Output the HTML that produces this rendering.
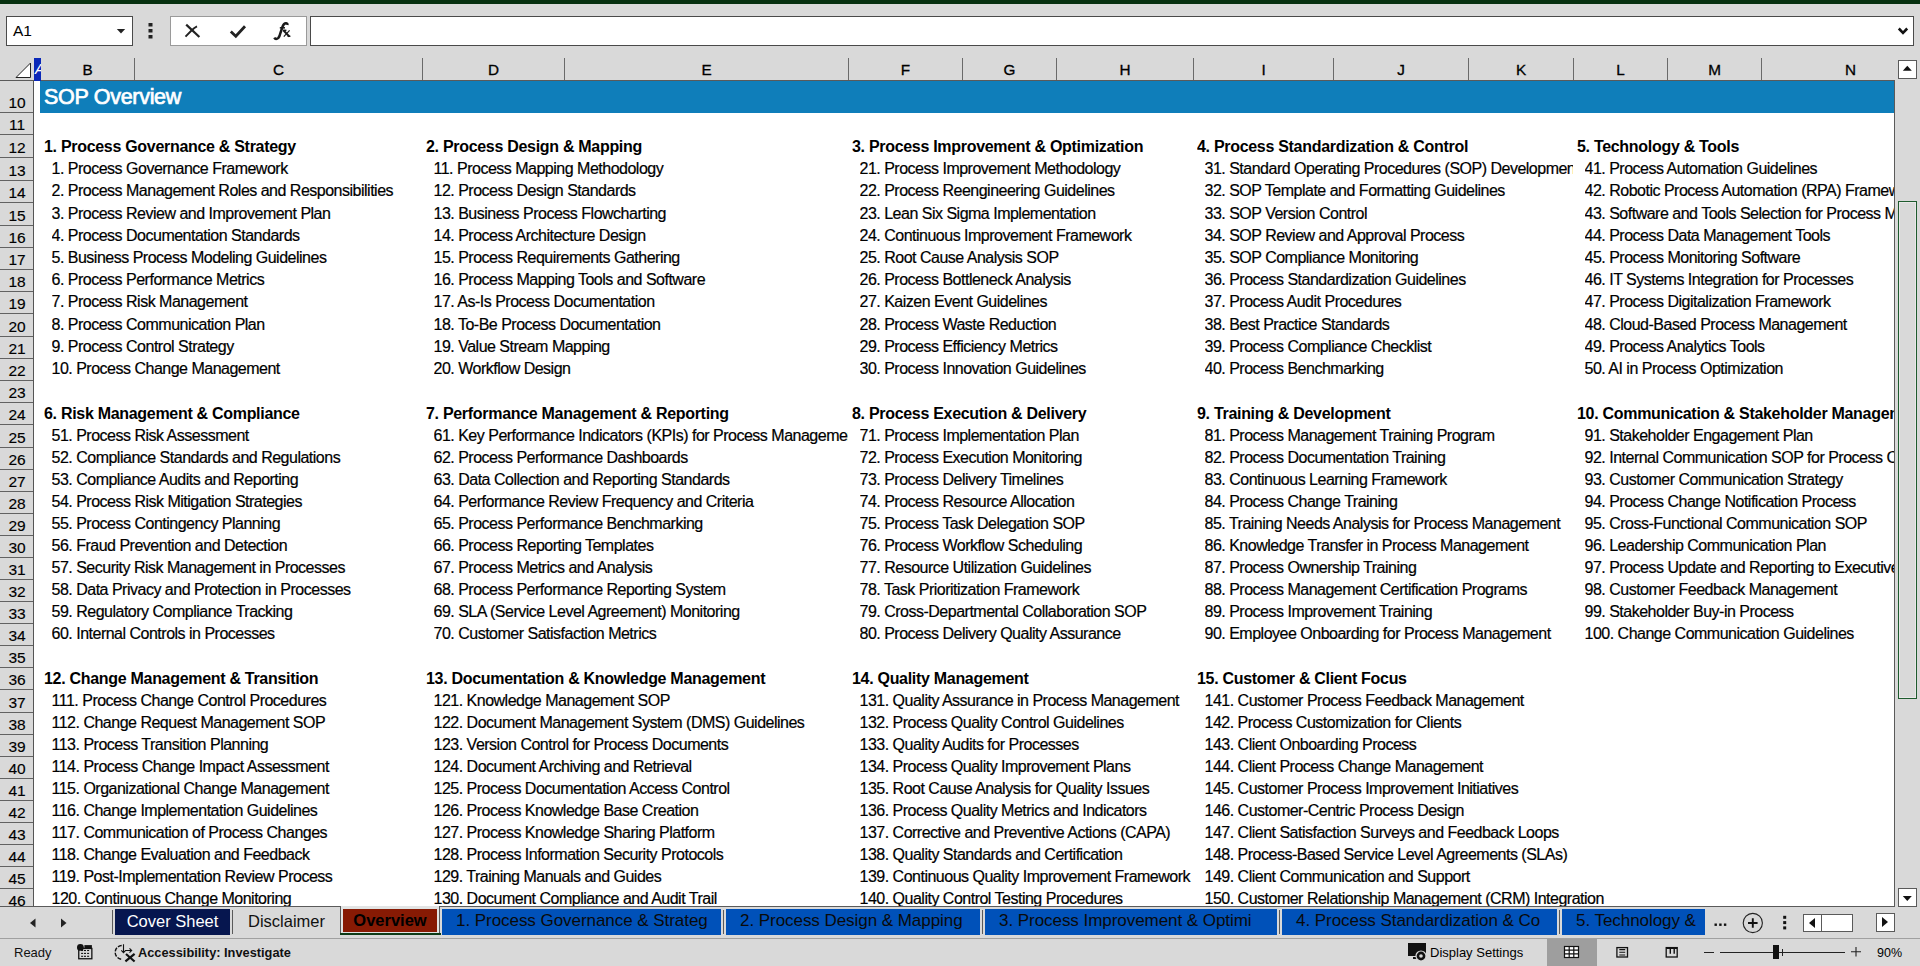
<!DOCTYPE html>
<html><head><meta charset="utf-8"><style>
*{margin:0;padding:0;box-sizing:border-box}
html,body{width:1920px;height:966px;overflow:hidden;background:#d9d9d9;font-family:"Liberation Sans",sans-serif;color:#000}
.a{position:absolute}
.it{position:absolute;font-size:16px;line-height:20px;letter-spacing:-0.5px;-webkit-text-stroke:0.2px #000;white-space:nowrap;overflow:hidden}
.hd{position:absolute;font-size:16px;line-height:20px;font-weight:bold;letter-spacing:-0.3px;white-space:nowrap;overflow:hidden}
.rn{position:absolute;left:0;width:34px;text-align:center;font-size:15.5px;line-height:14px;-webkit-text-stroke:0.15px #000}
.rl{position:absolute;left:0;width:33px;height:1px;background:#626262}
.ch{position:absolute;top:62px;padding-left:1px;text-align:center;font-size:15.3px;line-height:16px;-webkit-text-stroke:0.3px #000}
.cd{position:absolute;top:58px;width:1px;height:22px;background:#6a6a6a}
.tab{position:absolute;top:909px;height:26px;font-size:16.5px;line-height:24px;white-space:nowrap}
.sep{position:absolute;top:910px;width:1px;height:24px;background:#5a5a5a}
</style></head><body>

<div class="a" style="left:0;top:0;width:1920px;height:4px;background:#06300f"></div>
<div class="a" style="left:6px;top:16px;width:127px;height:30px;background:#fff;border:1px solid #4a4a4a"></div>
<div class="a" style="left:13px;top:22px;font-size:15.5px;line-height:18px">A1</div>
<svg class="a" style="left:116px;top:27px" width="10" height="8"><path d="M0.8 2 L9.2 2 L5 6.5 Z" fill="#222"/></svg>
<svg class="a" style="left:148px;top:22px" width="6" height="18"><rect x="0.5" y="1" width="4" height="3.5" fill="#222"/><rect x="0.5" y="7" width="4" height="3.5" fill="#222"/><rect x="0.5" y="13" width="4" height="3.5" fill="#222"/></svg>
<div class="a" style="left:170px;top:16px;width:137px;height:30px;background:#fff;border:1px solid #9a9a9a"></div>
<svg class="a" style="left:180px;top:20px" width="24" height="20"><path d="M6.2 4.6 L19.4 17" stroke="#222" stroke-width="2.2" stroke-linecap="butt"/><path d="M5.5 16.7 L11.5 10.5 Q14.5 7.5 17 6.4" stroke="#222" stroke-width="1.9" fill="none"/></svg>
<svg class="a" style="left:228px;top:22px" width="20" height="18"><path d="M2.8 9.5 L7.8 14.2 L17 4.2" stroke="#222" stroke-width="2.8" fill="none" stroke-linejoin="miter"/></svg>
<svg class="a" style="left:270px;top:20px" width="24" height="22"><path d="M4.3 17.6 Q5.8 20.2 8.4 17.8 Q9.6 16.5 10.4 13 L12.6 6.5 Q14 2.8 16.2 3.2 Q17.6 3.5 17.4 5" stroke="#1a1a1a" stroke-width="2.5" fill="none"/><path d="M9.8 7.8 H15" stroke="#1a1a1a" stroke-width="1.5"/><path d="M13.6 10.5 L19.4 16.6" stroke="#1a1a1a" stroke-width="2.1"/><path d="M19.6 10.4 L13.8 16.6" stroke="#1a1a1a" stroke-width="1.2"/><rect x="13" y="9.6" width="3.4" height="1.4" fill="#1a1a1a"/><rect x="17.6" y="15.6" width="2.8" height="1.4" fill="#1a1a1a"/></svg>
<div class="a" style="left:310px;top:16px;width:1604px;height:30px;background:#fff;border:1px solid #4a4a4a"></div>
<svg class="a" style="left:1897px;top:26px" width="12" height="10"><path d="M1.8 2.5 L6 6.8 L10.2 2.5" stroke="#111" stroke-width="2.6" fill="none"/></svg>
<div class="a" style="left:0;top:80px;width:1895px;height:1px;background:#5a5a5a"></div>
<svg class="a" style="left:14px;top:61px" width="18" height="18"><path d="M2 16.5 L16.5 16.5 L16.5 2 Z" fill="#fff" stroke="#222" stroke-width="1"/></svg>
<div class="a" style="left:34px;top:58px;width:7px;height:23px;background:#0a28b8;overflow:hidden"><div style="position:absolute;left:1px;top:3px;color:#fff;font-size:14.5px;font-style:italic;line-height:16px">A</div></div>
<div class="ch" style="left:40px;width:94px">B</div>
<div class="cd" style="left:134px"></div>
<div class="ch" style="left:134px;width:288px">C</div>
<div class="cd" style="left:422px"></div>
<div class="ch" style="left:422px;width:142px">D</div>
<div class="cd" style="left:564px"></div>
<div class="ch" style="left:564px;width:284px">E</div>
<div class="cd" style="left:848px"></div>
<div class="ch" style="left:848px;width:114px">F</div>
<div class="cd" style="left:962px"></div>
<div class="ch" style="left:962px;width:94px">G</div>
<div class="cd" style="left:1056px"></div>
<div class="ch" style="left:1056px;width:137px">H</div>
<div class="cd" style="left:1193px"></div>
<div class="ch" style="left:1193px;width:140px">I</div>
<div class="cd" style="left:1333px"></div>
<div class="ch" style="left:1333px;width:135px">J</div>
<div class="cd" style="left:1468px"></div>
<div class="ch" style="left:1468px;width:105px">K</div>
<div class="cd" style="left:1573px"></div>
<div class="ch" style="left:1573px;width:94px">L</div>
<div class="cd" style="left:1667px"></div>
<div class="ch" style="left:1667px;width:94px">M</div>
<div class="cd" style="left:1761px"></div>
<div class="ch" style="left:1800px;width:100px">N</div>
<div class="a" style="left:34px;top:81px;width:1860px;height:825px;background:#fff;overflow:hidden">
<div class="a" style="left:6px;top:0;width:1860px;height:32px;background:#0f7eba"></div>
<div class="a" style="left:10px;top:4px;font-size:21.5px;line-height:24px;color:#fff;letter-spacing:-0.3px;-webkit-text-stroke:0.7px #fff">SOP Overview</div>
<div class="hd" style="left:10px;top:56.46px;width:378px">1. Process Governance &amp; Strategy</div>
<div class="it" style="left:17.5px;top:78.46px;width:370.5px">1. Process Governance Framework</div>
<div class="it" style="left:17.5px;top:100.46px;width:370.5px">2. Process Management Roles and Responsibilities</div>
<div class="it" style="left:17.5px;top:123.46px;width:370.5px">3. Process Review and Improvement Plan</div>
<div class="it" style="left:17.5px;top:145.46px;width:370.5px">4. Process Documentation Standards</div>
<div class="it" style="left:17.5px;top:167.46px;width:370.5px">5. Business Process Modeling Guidelines</div>
<div class="it" style="left:17.5px;top:189.46px;width:370.5px">6. Process Performance Metrics</div>
<div class="it" style="left:17.5px;top:211.46px;width:370.5px">7. Process Risk Management</div>
<div class="it" style="left:17.5px;top:234.46px;width:370.5px">8. Process Communication Plan</div>
<div class="it" style="left:17.5px;top:256.46px;width:370.5px">9. Process Control Strategy</div>
<div class="it" style="left:17.5px;top:278.46px;width:370.5px">10. Process Change Management</div>
<div class="hd" style="left:392px;top:56.46px;width:422px">2. Process Design &amp; Mapping</div>
<div class="it" style="left:399.5px;top:78.46px;width:414.5px">11. Process Mapping Methodology</div>
<div class="it" style="left:399.5px;top:100.46px;width:414.5px">12. Process Design Standards</div>
<div class="it" style="left:399.5px;top:123.46px;width:414.5px">13. Business Process Flowcharting</div>
<div class="it" style="left:399.5px;top:145.46px;width:414.5px">14. Process Architecture Design</div>
<div class="it" style="left:399.5px;top:167.46px;width:414.5px">15. Process Requirements Gathering</div>
<div class="it" style="left:399.5px;top:189.46px;width:414.5px">16. Process Mapping Tools and Software</div>
<div class="it" style="left:399.5px;top:211.46px;width:414.5px">17. As-Is Process Documentation</div>
<div class="it" style="left:399.5px;top:234.46px;width:414.5px">18. To-Be Process Documentation</div>
<div class="it" style="left:399.5px;top:256.46px;width:414.5px">19. Value Stream Mapping</div>
<div class="it" style="left:399.5px;top:278.46px;width:414.5px">20. Workflow Design</div>
<div class="hd" style="left:818px;top:56.46px;width:341px">3. Process Improvement &amp; Optimization</div>
<div class="it" style="left:825.5px;top:78.46px;width:333.5px">21. Process Improvement Methodology</div>
<div class="it" style="left:825.5px;top:100.46px;width:333.5px">22. Process Reengineering Guidelines</div>
<div class="it" style="left:825.5px;top:123.46px;width:333.5px">23. Lean Six Sigma Implementation</div>
<div class="it" style="left:825.5px;top:145.46px;width:333.5px">24. Continuous Improvement Framework</div>
<div class="it" style="left:825.5px;top:167.46px;width:333.5px">25. Root Cause Analysis SOP</div>
<div class="it" style="left:825.5px;top:189.46px;width:333.5px">26. Process Bottleneck Analysis</div>
<div class="it" style="left:825.5px;top:211.46px;width:333.5px">27. Kaizen Event Guidelines</div>
<div class="it" style="left:825.5px;top:234.46px;width:333.5px">28. Process Waste Reduction</div>
<div class="it" style="left:825.5px;top:256.46px;width:333.5px">29. Process Efficiency Metrics</div>
<div class="it" style="left:825.5px;top:278.46px;width:333.5px">30. Process Innovation Guidelines</div>
<div class="hd" style="left:1163px;top:56.46px;width:376px">4. Process Standardization &amp; Control</div>
<div class="it" style="left:1170.5px;top:78.46px;width:368.5px">31. Standard Operating Procedures (SOP) Development</div>
<div class="it" style="left:1170.5px;top:100.46px;width:368.5px">32. SOP Template and Formatting Guidelines</div>
<div class="it" style="left:1170.5px;top:123.46px;width:368.5px">33. SOP Version Control</div>
<div class="it" style="left:1170.5px;top:145.46px;width:368.5px">34. SOP Review and Approval Process</div>
<div class="it" style="left:1170.5px;top:167.46px;width:368.5px">35. SOP Compliance Monitoring</div>
<div class="it" style="left:1170.5px;top:189.46px;width:368.5px">36. Process Standardization Guidelines</div>
<div class="it" style="left:1170.5px;top:211.46px;width:368.5px">37. Process Audit Procedures</div>
<div class="it" style="left:1170.5px;top:234.46px;width:368.5px">38. Best Practice Standards</div>
<div class="it" style="left:1170.5px;top:256.46px;width:368.5px">39. Process Compliance Checklist</div>
<div class="it" style="left:1170.5px;top:278.46px;width:368.5px">40. Process Benchmarking</div>
<div class="hd" style="left:1543px;top:56.46px;width:317px">5. Technology &amp; Tools</div>
<div class="it" style="left:1550.5px;top:78.46px;width:309.5px">41. Process Automation Guidelines</div>
<div class="it" style="left:1550.5px;top:100.46px;width:309.5px">42. Robotic Process Automation (RPA) Framework</div>
<div class="it" style="left:1550.5px;top:123.46px;width:309.5px">43. Software and Tools Selection for Process Management</div>
<div class="it" style="left:1550.5px;top:145.46px;width:309.5px">44. Process Data Management Tools</div>
<div class="it" style="left:1550.5px;top:167.46px;width:309.5px">45. Process Monitoring Software</div>
<div class="it" style="left:1550.5px;top:189.46px;width:309.5px">46. IT Systems Integration for Processes</div>
<div class="it" style="left:1550.5px;top:211.46px;width:309.5px">47. Process Digitalization Framework</div>
<div class="it" style="left:1550.5px;top:234.46px;width:309.5px">48. Cloud-Based Process Management</div>
<div class="it" style="left:1550.5px;top:256.46px;width:309.5px">49. Process Analytics Tools</div>
<div class="it" style="left:1550.5px;top:278.46px;width:309.5px">50. AI in Process Optimization</div>
<div class="hd" style="left:10px;top:323.46px;width:378px">6. Risk Management &amp; Compliance</div>
<div class="it" style="left:17.5px;top:345.46px;width:370.5px">51. Process Risk Assessment</div>
<div class="it" style="left:17.5px;top:367.46px;width:370.5px">52. Compliance Standards and Regulations</div>
<div class="it" style="left:17.5px;top:389.46px;width:370.5px">53. Compliance Audits and Reporting</div>
<div class="it" style="left:17.5px;top:411.46px;width:370.5px">54. Process Risk Mitigation Strategies</div>
<div class="it" style="left:17.5px;top:433.46px;width:370.5px">55. Process Contingency Planning</div>
<div class="it" style="left:17.5px;top:455.46px;width:370.5px">56. Fraud Prevention and Detection</div>
<div class="it" style="left:17.5px;top:477.46px;width:370.5px">57. Security Risk Management in Processes</div>
<div class="it" style="left:17.5px;top:499.46px;width:370.5px">58. Data Privacy and Protection in Processes</div>
<div class="it" style="left:17.5px;top:521.46px;width:370.5px">59. Regulatory Compliance Tracking</div>
<div class="it" style="left:17.5px;top:543.46px;width:370.5px">60. Internal Controls in Processes</div>
<div class="hd" style="left:392px;top:323.46px;width:422px">7. Performance Management &amp; Reporting</div>
<div class="it" style="left:399.5px;top:345.46px;width:414.5px">61. Key Performance Indicators (KPIs) for Process Management</div>
<div class="it" style="left:399.5px;top:367.46px;width:414.5px">62. Process Performance Dashboards</div>
<div class="it" style="left:399.5px;top:389.46px;width:414.5px">63. Data Collection and Reporting Standards</div>
<div class="it" style="left:399.5px;top:411.46px;width:414.5px">64. Performance Review Frequency and Criteria</div>
<div class="it" style="left:399.5px;top:433.46px;width:414.5px">65. Process Performance Benchmarking</div>
<div class="it" style="left:399.5px;top:455.46px;width:414.5px">66. Process Reporting Templates</div>
<div class="it" style="left:399.5px;top:477.46px;width:414.5px">67. Process Metrics and Analysis</div>
<div class="it" style="left:399.5px;top:499.46px;width:414.5px">68. Process Performance Reporting System</div>
<div class="it" style="left:399.5px;top:521.46px;width:414.5px">69. SLA (Service Level Agreement) Monitoring</div>
<div class="it" style="left:399.5px;top:543.46px;width:414.5px">70. Customer Satisfaction Metrics</div>
<div class="hd" style="left:818px;top:323.46px;width:341px">8. Process Execution &amp; Delivery</div>
<div class="it" style="left:825.5px;top:345.46px;width:333.5px">71. Process Implementation Plan</div>
<div class="it" style="left:825.5px;top:367.46px;width:333.5px">72. Process Execution Monitoring</div>
<div class="it" style="left:825.5px;top:389.46px;width:333.5px">73. Process Delivery Timelines</div>
<div class="it" style="left:825.5px;top:411.46px;width:333.5px">74. Process Resource Allocation</div>
<div class="it" style="left:825.5px;top:433.46px;width:333.5px">75. Process Task Delegation SOP</div>
<div class="it" style="left:825.5px;top:455.46px;width:333.5px">76. Process Workflow Scheduling</div>
<div class="it" style="left:825.5px;top:477.46px;width:333.5px">77. Resource Utilization Guidelines</div>
<div class="it" style="left:825.5px;top:499.46px;width:333.5px">78. Task Prioritization Framework</div>
<div class="it" style="left:825.5px;top:521.46px;width:333.5px">79. Cross-Departmental Collaboration SOP</div>
<div class="it" style="left:825.5px;top:543.46px;width:333.5px">80. Process Delivery Quality Assurance</div>
<div class="hd" style="left:1163px;top:323.46px;width:376px">9. Training &amp; Development</div>
<div class="it" style="left:1170.5px;top:345.46px;width:368.5px">81. Process Management Training Program</div>
<div class="it" style="left:1170.5px;top:367.46px;width:368.5px">82. Process Documentation Training</div>
<div class="it" style="left:1170.5px;top:389.46px;width:368.5px">83. Continuous Learning Framework</div>
<div class="it" style="left:1170.5px;top:411.46px;width:368.5px">84. Process Change Training</div>
<div class="it" style="left:1170.5px;top:433.46px;width:368.5px">85. Training Needs Analysis for Process Management</div>
<div class="it" style="left:1170.5px;top:455.46px;width:368.5px">86. Knowledge Transfer in Process Management</div>
<div class="it" style="left:1170.5px;top:477.46px;width:368.5px">87. Process Ownership Training</div>
<div class="it" style="left:1170.5px;top:499.46px;width:368.5px">88. Process Management Certification Programs</div>
<div class="it" style="left:1170.5px;top:521.46px;width:368.5px">89. Process Improvement Training</div>
<div class="it" style="left:1170.5px;top:543.46px;width:368.5px">90. Employee Onboarding for Process Management</div>
<div class="hd" style="left:1543px;top:323.46px;width:317px">10. Communication &amp; Stakeholder Management</div>
<div class="it" style="left:1550.5px;top:345.46px;width:309.5px">91. Stakeholder Engagement Plan</div>
<div class="it" style="left:1550.5px;top:367.46px;width:309.5px">92. Internal Communication SOP for Process Changes</div>
<div class="it" style="left:1550.5px;top:389.46px;width:309.5px">93. Customer Communication Strategy</div>
<div class="it" style="left:1550.5px;top:411.46px;width:309.5px">94. Process Change Notification Process</div>
<div class="it" style="left:1550.5px;top:433.46px;width:309.5px">95. Cross-Functional Communication SOP</div>
<div class="it" style="left:1550.5px;top:455.46px;width:309.5px">96. Leadership Communication Plan</div>
<div class="it" style="left:1550.5px;top:477.46px;width:309.5px">97. Process Update and Reporting to Executives</div>
<div class="it" style="left:1550.5px;top:499.46px;width:309.5px">98. Customer Feedback Management</div>
<div class="it" style="left:1550.5px;top:521.46px;width:309.5px">99. Stakeholder Buy-in Process</div>
<div class="it" style="left:1550.5px;top:543.46px;width:309.5px">100. Change Communication Guidelines</div>
<div class="hd" style="left:10px;top:588.46px;width:378px">12. Change Management &amp; Transition</div>
<div class="it" style="left:17.5px;top:610.46px;width:370.5px">111. Process Change Control Procedures</div>
<div class="it" style="left:17.5px;top:632.46px;width:370.5px">112. Change Request Management SOP</div>
<div class="it" style="left:17.5px;top:654.46px;width:370.5px">113. Process Transition Planning</div>
<div class="it" style="left:17.5px;top:676.46px;width:370.5px">114. Process Change Impact Assessment</div>
<div class="it" style="left:17.5px;top:698.46px;width:370.5px">115. Organizational Change Management</div>
<div class="it" style="left:17.5px;top:720.46px;width:370.5px">116. Change Implementation Guidelines</div>
<div class="it" style="left:17.5px;top:742.46px;width:370.5px">117. Communication of Process Changes</div>
<div class="it" style="left:17.5px;top:764.46px;width:370.5px">118. Change Evaluation and Feedback</div>
<div class="it" style="left:17.5px;top:786.46px;width:370.5px">119. Post-Implementation Review Process</div>
<div class="it" style="left:17.5px;top:808.46px;width:370.5px">120. Continuous Change Monitoring</div>
<div class="hd" style="left:392px;top:588.46px;width:422px">13. Documentation &amp; Knowledge Management</div>
<div class="it" style="left:399.5px;top:610.46px;width:414.5px">121. Knowledge Management SOP</div>
<div class="it" style="left:399.5px;top:632.46px;width:414.5px">122. Document Management System (DMS) Guidelines</div>
<div class="it" style="left:399.5px;top:654.46px;width:414.5px">123. Version Control for Process Documents</div>
<div class="it" style="left:399.5px;top:676.46px;width:414.5px">124. Document Archiving and Retrieval</div>
<div class="it" style="left:399.5px;top:698.46px;width:414.5px">125. Process Documentation Access Control</div>
<div class="it" style="left:399.5px;top:720.46px;width:414.5px">126. Process Knowledge Base Creation</div>
<div class="it" style="left:399.5px;top:742.46px;width:414.5px">127. Process Knowledge Sharing Platform</div>
<div class="it" style="left:399.5px;top:764.46px;width:414.5px">128. Process Information Security Protocols</div>
<div class="it" style="left:399.5px;top:786.46px;width:414.5px">129. Training Manuals and Guides</div>
<div class="it" style="left:399.5px;top:808.46px;width:414.5px">130. Document Compliance and Audit Trail</div>
<div class="hd" style="left:818px;top:588.46px;width:341px">14. Quality Management</div>
<div class="it" style="left:825.5px;top:610.46px;width:333.5px">131. Quality Assurance in Process Management</div>
<div class="it" style="left:825.5px;top:632.46px;width:333.5px">132. Process Quality Control Guidelines</div>
<div class="it" style="left:825.5px;top:654.46px;width:333.5px">133. Quality Audits for Processes</div>
<div class="it" style="left:825.5px;top:676.46px;width:333.5px">134. Process Quality Improvement Plans</div>
<div class="it" style="left:825.5px;top:698.46px;width:333.5px">135. Root Cause Analysis for Quality Issues</div>
<div class="it" style="left:825.5px;top:720.46px;width:333.5px">136. Process Quality Metrics and Indicators</div>
<div class="it" style="left:825.5px;top:742.46px;width:333.5px">137. Corrective and Preventive Actions (CAPA)</div>
<div class="it" style="left:825.5px;top:764.46px;width:333.5px">138. Quality Standards and Certification</div>
<div class="it" style="left:825.5px;top:786.46px;width:333.5px">139. Continuous Quality Improvement Framework</div>
<div class="it" style="left:825.5px;top:808.46px;width:333.5px">140. Quality Control Testing Procedures</div>
<div class="hd" style="left:1163px;top:588.46px;width:697px">15. Customer &amp; Client Focus</div>
<div class="it" style="left:1170.5px;top:610.46px;width:689.5px">141. Customer Process Feedback Management</div>
<div class="it" style="left:1170.5px;top:632.46px;width:689.5px">142. Process Customization for Clients</div>
<div class="it" style="left:1170.5px;top:654.46px;width:689.5px">143. Client Onboarding Process</div>
<div class="it" style="left:1170.5px;top:676.46px;width:689.5px">144. Client Process Change Management</div>
<div class="it" style="left:1170.5px;top:698.46px;width:689.5px">145. Customer Process Improvement Initiatives</div>
<div class="it" style="left:1170.5px;top:720.46px;width:689.5px">146. Customer-Centric Process Design</div>
<div class="it" style="left:1170.5px;top:742.46px;width:689.5px">147. Client Satisfaction Surveys and Feedback Loops</div>
<div class="it" style="left:1170.5px;top:764.46px;width:689.5px">148. Process-Based Service Level Agreements (SLAs)</div>
<div class="it" style="left:1170.5px;top:786.46px;width:689.5px">149. Client Communication and Support</div>
<div class="it" style="left:1170.5px;top:808.46px;width:689.5px">150. Customer Relationship Management (CRM) Integration</div>
</div>
<div class="a" style="left:1894px;top:81px;width:1px;height:825px;background:#5a5a5a"></div>
<div class="a" style="left:0;top:906px;width:1895px;height:1px;background:#5a5a5a"></div>
<div class="a" style="left:33px;top:81px;width:1px;height:825px;background:#555"></div>
<div class="rl" style="top:112px"></div>
<div class="rn" style="top:95.63px">10</div>
<div class="rl" style="top:134px"></div>
<div class="rn" style="top:117.63px">11</div>
<div class="rl" style="top:157px"></div>
<div class="rn" style="top:140.63px">12</div>
<div class="rl" style="top:180px"></div>
<div class="rn" style="top:163.63px">13</div>
<div class="rl" style="top:202px"></div>
<div class="rn" style="top:185.63px">14</div>
<div class="rl" style="top:225px"></div>
<div class="rn" style="top:208.63px">15</div>
<div class="rl" style="top:247px"></div>
<div class="rn" style="top:230.63px">16</div>
<div class="rl" style="top:269px"></div>
<div class="rn" style="top:252.63px">17</div>
<div class="rl" style="top:291px"></div>
<div class="rn" style="top:274.63px">18</div>
<div class="rl" style="top:313px"></div>
<div class="rn" style="top:296.63px">19</div>
<div class="rl" style="top:336px"></div>
<div class="rn" style="top:319.63px">20</div>
<div class="rl" style="top:358px"></div>
<div class="rn" style="top:341.63px">21</div>
<div class="rl" style="top:380px"></div>
<div class="rn" style="top:363.63px">22</div>
<div class="rl" style="top:402px"></div>
<div class="rn" style="top:385.63px">23</div>
<div class="rl" style="top:424px"></div>
<div class="rn" style="top:407.63px">24</div>
<div class="rl" style="top:447px"></div>
<div class="rn" style="top:430.63px">25</div>
<div class="rl" style="top:469px"></div>
<div class="rn" style="top:452.63px">26</div>
<div class="rl" style="top:491px"></div>
<div class="rn" style="top:474.63px">27</div>
<div class="rl" style="top:513px"></div>
<div class="rn" style="top:496.63px">28</div>
<div class="rl" style="top:535px"></div>
<div class="rn" style="top:518.63px">29</div>
<div class="rl" style="top:557px"></div>
<div class="rn" style="top:540.63px">30</div>
<div class="rl" style="top:579px"></div>
<div class="rn" style="top:562.63px">31</div>
<div class="rl" style="top:601px"></div>
<div class="rn" style="top:584.63px">32</div>
<div class="rl" style="top:623px"></div>
<div class="rn" style="top:606.63px">33</div>
<div class="rl" style="top:645px"></div>
<div class="rn" style="top:628.63px">34</div>
<div class="rl" style="top:667px"></div>
<div class="rn" style="top:650.63px">35</div>
<div class="rl" style="top:689px"></div>
<div class="rn" style="top:672.63px">36</div>
<div class="rl" style="top:712px"></div>
<div class="rn" style="top:695.63px">37</div>
<div class="rl" style="top:734px"></div>
<div class="rn" style="top:717.63px">38</div>
<div class="rl" style="top:756px"></div>
<div class="rn" style="top:739.63px">39</div>
<div class="rl" style="top:778px"></div>
<div class="rn" style="top:761.63px">40</div>
<div class="rl" style="top:800px"></div>
<div class="rn" style="top:783.63px">41</div>
<div class="rl" style="top:822px"></div>
<div class="rn" style="top:805.63px">42</div>
<div class="rl" style="top:844px"></div>
<div class="rn" style="top:827.63px">43</div>
<div class="rl" style="top:866px"></div>
<div class="rn" style="top:849.63px">44</div>
<div class="rl" style="top:888px"></div>
<div class="rn" style="top:871.63px">45</div>
<div class="rn" style="top:893.63px">46</div>
<div class="a" style="left:1898px;top:60px;width:19px;height:19px;background:#fff;border:1px solid #5a5a5a"></div>
<svg class="a" style="left:1900px;top:62px" width="14" height="12"><path d="M2.8 8.8 L11.8 8.8 L7.3 3.8 Z" fill="#111"/></svg>
<div class="a" style="left:1898px;top:201px;width:19px;height:498px;background:#d9d9d9;border:1px solid #1e5b2e;box-shadow:inset 0 0 0 1px #e8e8e8"></div>
<div class="a" style="left:1898px;top:888px;width:19px;height:19px;background:#fff;border:1px solid #5a5a5a"></div>
<svg class="a" style="left:1900px;top:893px" width="14" height="12"><path d="M2.8 3 L11.8 3 L7.3 8 Z" fill="#111"/></svg>
<svg class="a" style="left:26px;top:914px" width="12" height="16"><path d="M9.5 4.5 L9.5 13.5 L4 9 Z" fill="#222"/></svg>
<svg class="a" style="left:58px;top:914px" width="12" height="16"><path d="M3 4.5 L3 13.5 L8.5 9 Z" fill="#222"/></svg>
<div class="sep" style="left:112px"></div>
<div class="tab" style="left:115px;width:115px;background:#06164f;color:#fff;text-align:center">Cover Sheet</div>
<div class="sep" style="left:232px"></div>
<div class="tab" style="left:235px;width:103px;color:#111;text-align:center">Disclaimer</div>
<div class="a" style="left:340px;top:906px;width:100px;height:29px;background:#e2e4e4;border-left:1px solid #5a5a5a;border-right:1px solid #5a5a5a"></div>
<div class="a" style="left:340px;top:933px;width:101px;height:2px;background:#0c3a16"></div>
<div class="tab" style="left:343px;width:94px;height:23px;line-height:23px;background:#871a04;color:#000;font-weight:bold;text-align:center;font-size:16.5px">Overview</div>
<div class="tab" style="left:442px;width:279px;background:#0051b9;color:#0a0a0a;padding-left:14px;font-size:17px;letter-spacing:-0.05px;overflow:hidden">1. Process Governance &amp; Strateg</div>
<div class="tab" style="left:726px;width:254px;background:#0051b9;color:#0a0a0a;padding-left:14px;font-size:17px;letter-spacing:-0.05px;overflow:hidden">2. Process Design &amp; Mapping</div>
<div class="tab" style="left:985px;width:292px;background:#0051b9;color:#0a0a0a;padding-left:14px;font-size:17px;letter-spacing:-0.05px;overflow:hidden">3. Process Improvement &amp; Optimi</div>
<div class="tab" style="left:1282px;width:275px;background:#0051b9;color:#0a0a0a;padding-left:14px;font-size:17px;letter-spacing:-0.05px;overflow:hidden">4. Process Standardization &amp; Co</div>
<div class="tab" style="left:1562px;width:143px;background:#0051b9;color:#0a0a0a;padding-left:14px;font-size:17px;letter-spacing:-0.05px;overflow:hidden">5. Technology &amp;</div>
<div class="sep" style="left:723px"></div>
<div class="sep" style="left:982px"></div>
<div class="sep" style="left:1279px"></div>
<div class="sep" style="left:1559px"></div>
<svg class="a" style="left:1714px;top:923px" width="14" height="4"><rect x="0.5" y="0.5" width="2.4" height="2.4" fill="#111"/><rect x="5.2" y="0.5" width="2.4" height="2.4" fill="#111"/><rect x="9.9" y="0.5" width="2.4" height="2.4" fill="#111"/></svg>
<svg class="a" style="left:1741px;top:912px" width="24" height="24"><circle cx="11.8" cy="11" r="9.6" fill="none" stroke="#222" stroke-width="1.1"/><path d="M11.8 6.2 V15.8 M7 11 H16.6" stroke="#111" stroke-width="1.9"/></svg>
<svg class="a" style="left:1782px;top:915px" width="6" height="16"><rect x="1.2" y="0.8" width="3" height="3" fill="#111"/><rect x="1.2" y="6.1" width="3" height="3" fill="#111"/><rect x="1.2" y="11.4" width="3" height="3" fill="#111"/></svg>
<div class="a" style="left:1803px;top:914px;width:19px;height:18px;background:#fff;border:1px solid #5a5a5a"></div>
<svg class="a" style="left:1806px;top:917px" width="12" height="12"><path d="M9 1 L9 11 L3 6 Z" fill="#111"/></svg>
<div class="a" style="left:1821px;top:914px;width:32px;height:18px;background:#fff;border:1px solid #5a5a5a"></div>
<div class="a" style="left:1876px;top:913px;width:19px;height:19px;background:#fff;border:1px solid #5a5a5a"></div>
<svg class="a" style="left:1879px;top:916px" width="12" height="12"><path d="M3 1 L3 11 L9 6 Z" fill="#111"/></svg>
<div class="a" style="left:0;top:938px;width:1920px;height:1px;background:#a0a0a0"></div>
<div class="a" style="left:14px;top:945px;font-size:13px;line-height:15px;color:#111">Ready</div>
<svg class="a" style="left:76px;top:942px" width="18" height="18"><circle cx="4.4" cy="5.4" r="3.4" fill="#111"/><rect x="8.4" y="3.1" width="7.5" height="3.4" fill="#111"/><rect x="2.75" y="6.45" width="13.1" height="10.3" fill="none" stroke="#111" stroke-width="1.3"/><rect x="5.1" y="7.95" width="2" height="1.1" fill="#111"/><rect x="8.0" y="7.95" width="2" height="1.1" fill="#111"/><rect x="11.1" y="7.95" width="2" height="1.1" fill="#111"/><rect x="5.1" y="10.85" width="2" height="1.1" fill="#111"/><rect x="8.0" y="10.85" width="2" height="1.1" fill="#111"/><rect x="11.1" y="10.85" width="2" height="1.1" fill="#111"/><rect x="5.1" y="13.75" width="2" height="1.1" fill="#111"/><rect x="8.0" y="13.75" width="2" height="1.1" fill="#111"/><rect x="11.1" y="13.75" width="2" height="1.1" fill="#111"/></svg>
<svg class="a" style="left:112px;top:942px" width="26" height="22"><path d="M9.7 3.5 A6.9 6.9 0 0 0 10.5 17.3" fill="none" stroke="#111" stroke-width="1.4" stroke-dasharray="4 1.4"/><path d="M11.5 2.2 V10.6 M9.3 8.4 L11.5 10.6 L13.7 8.4 M13.4 8.5 H19.7 M17.5 6.3 L19.7 8.5 L17.5 10.7" fill="none" stroke="#111" stroke-width="1.1"/><path d="M14 12 L22.6 19.5 M13.4 19.4 L22.6 11.8" stroke="#111" stroke-width="2.2"/></svg>
<div class="a" style="left:138px;top:945px;font-size:12.8px;line-height:16px;font-weight:bold;color:#111">Accessibility: Investigate</div>
<svg class="a" style="left:1407px;top:942px" width="24" height="20"><rect x="1" y="1" width="18" height="13" fill="#111"/><rect x="6" y="15" width="6" height="2" fill="#111"/><circle cx="14" cy="14" r="5" fill="#111" stroke="#d9d9d9" stroke-width="1.2"/><circle cx="14" cy="14" r="1.8" fill="#d9d9d9"/></svg>
<div class="a" style="left:1430px;top:945px;font-size:13px;line-height:16px;color:#000">Display Settings</div>
<div class="a" style="left:1547px;top:939px;width:50px;height:27px;background:#9e9e9e"></div>
<svg class="a" style="left:1562px;top:944px" width="20" height="16"><rect x="2.5" y="2.5" width="14" height="11" fill="#fff" stroke="#111" stroke-width="1.2"/><path d="M2.5 6.2 H16.5 M2.5 9.8 H16.5 M7.2 2.5 V13.5 M11.8 2.5 V13.5" stroke="#111" stroke-width="1.2"/></svg>
<svg class="a" style="left:1613px;top:944px" width="18" height="16"><rect x="3.9" y="3.6" width="10.6" height="9.4" fill="none" stroke="#111" stroke-width="1.3"/><path d="M6.3 5.6 H12.2 M6.3 8.3 H12.2 M6.3 11 H12.2" stroke="#111" stroke-width="1.1"/></svg>
<svg class="a" style="left:1663px;top:944px" width="18" height="16"><rect x="3.2" y="3.6" width="11" height="9.4" fill="none" stroke="#111" stroke-width="1.3"/><rect x="3.2" y="3" width="11" height="2" fill="#111"/><path d="M7.3 4 V9.8 M11.2 4 V9.8" stroke="#111" stroke-width="1.4"/></svg>
<div class="a" style="left:1704px;top:952px;width:10px;height:1px;background:#222"></div>
<div class="a" style="left:1720px;top:952px;width:125px;height:1px;background:#222"></div>
<div class="a" style="left:1773px;top:945px;width:6px;height:14px;background:#111"></div>
<div class="a" style="left:1782px;top:949px;width:1px;height:7px;background:#222"></div>
<svg class="a" style="left:1850px;top:946px" width="12" height="12"><path d="M6 1 V10.5 M1 5.8 H11" stroke="#222" stroke-width="1.1"/></svg>
<div class="a" style="left:1877px;top:945px;font-size:12.5px;line-height:16px;color:#000">90%</div>
</body></html>
